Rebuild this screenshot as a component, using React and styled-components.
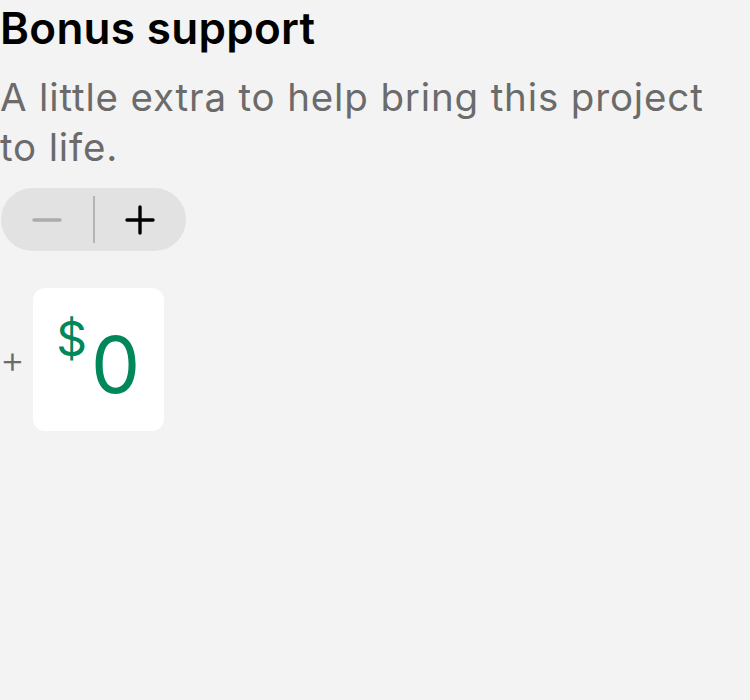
import styled, { createGlobalStyle } from 'styled-components';

const GlobalStyle = createGlobalStyle`
  html, body {
    margin: 0;
    padding: 0;
    background: #f3f3f3;
    font-family: Inter, 'Noto Sans', sans-serif;
  }
`;

const Page = styled.div`
  width: 750px;
  height: 700px;
  background: #f3f3f3;
  display: flex;
  flex-direction: column;
  align-items: flex-start;
`;

const Title = styled.h2`
  margin: 2px 0 0;
  font-size: 44px;
  line-height: 53px;
  font-weight: 600;
  color: #000;
  letter-spacing: 0.3px;
`;

const Subtitle = styled.p`
  margin: 17px 0 0;
  font-size: 38.5px;
  line-height: 50px;
  color: #6b6b6b;
  letter-spacing: 0.85px;
  max-width: 716px;
`;

const Stepper = styled.div`
  margin: 16px 0 0 1px;
  width: 185px;
  height: 63px;
  border-radius: 32px;
  background: #e2e2e2;
  display: flex;
  align-items: center;
`;

const StepButton = styled.button`
  flex: 1;
  height: 100%;
  border: none;
  background: transparent;
  display: flex;
  align-items: center;
  justify-content: center;
  padding: 0;
  color: ${(p) => (p.disabled ? '#acacac' : '#000')};
`;

const Divider = styled.div`
  width: 2px;
  height: 47px;
  background: #b4b4b4;
`;

const AmountRow = styled.div`
  margin-top: 37px;
  display: flex;
  align-items: center;
  gap: 8px;
`;

const PlusSign = styled.span`
  font-size: 38px;
  line-height: 1;
  color: #6b6b6b;
  font-weight: 300;
  margin-top: -2px;
`;

const Card = styled.div`
  width: 131px;
  height: 143px;
  background: #fff;
  border-radius: 12px;
  display: flex;
  align-items: center;
  justify-content: center;
  color: #00875a;
`;

const Currency = styled.span`
  font-size: 48px;
  line-height: 1;
  align-self: flex-start;
  margin-top: 27px;
  margin-right: 4px;
`;

const Value = styled.span`
  font-size: 78px;
  line-height: 1;
  margin-top: 10px;
`;

const Icon = ({ type }) => (
  <svg width="30" height="30" viewBox="0 0 30 30" fill="none" stroke="currentColor" strokeWidth="3.4" strokeLinecap="round">
    <line x1="2" y1="15" x2="28" y2="15" />
    {type === 'plus' && <line x1="15" y1="2" x2="15" y2="28" />}
  </svg>
);

export default function App() {
  return (
    <Page>
      <GlobalStyle />
      <Title>Bonus support</Title>
      <Subtitle>A little extra to help bring this project to life.</Subtitle>
      <Stepper>
        <StepButton disabled aria-label="Decrease">
          <Icon type="minus" />
        </StepButton>
        <Divider />
        <StepButton aria-label="Increase">
          <Icon type="plus" />
        </StepButton>
      </Stepper>
      <AmountRow>
        <PlusSign>+</PlusSign>
        <Card>
          <Currency>$</Currency>
          <Value>0</Value>
        </Card>
      </AmountRow>
    </Page>
  );
}
